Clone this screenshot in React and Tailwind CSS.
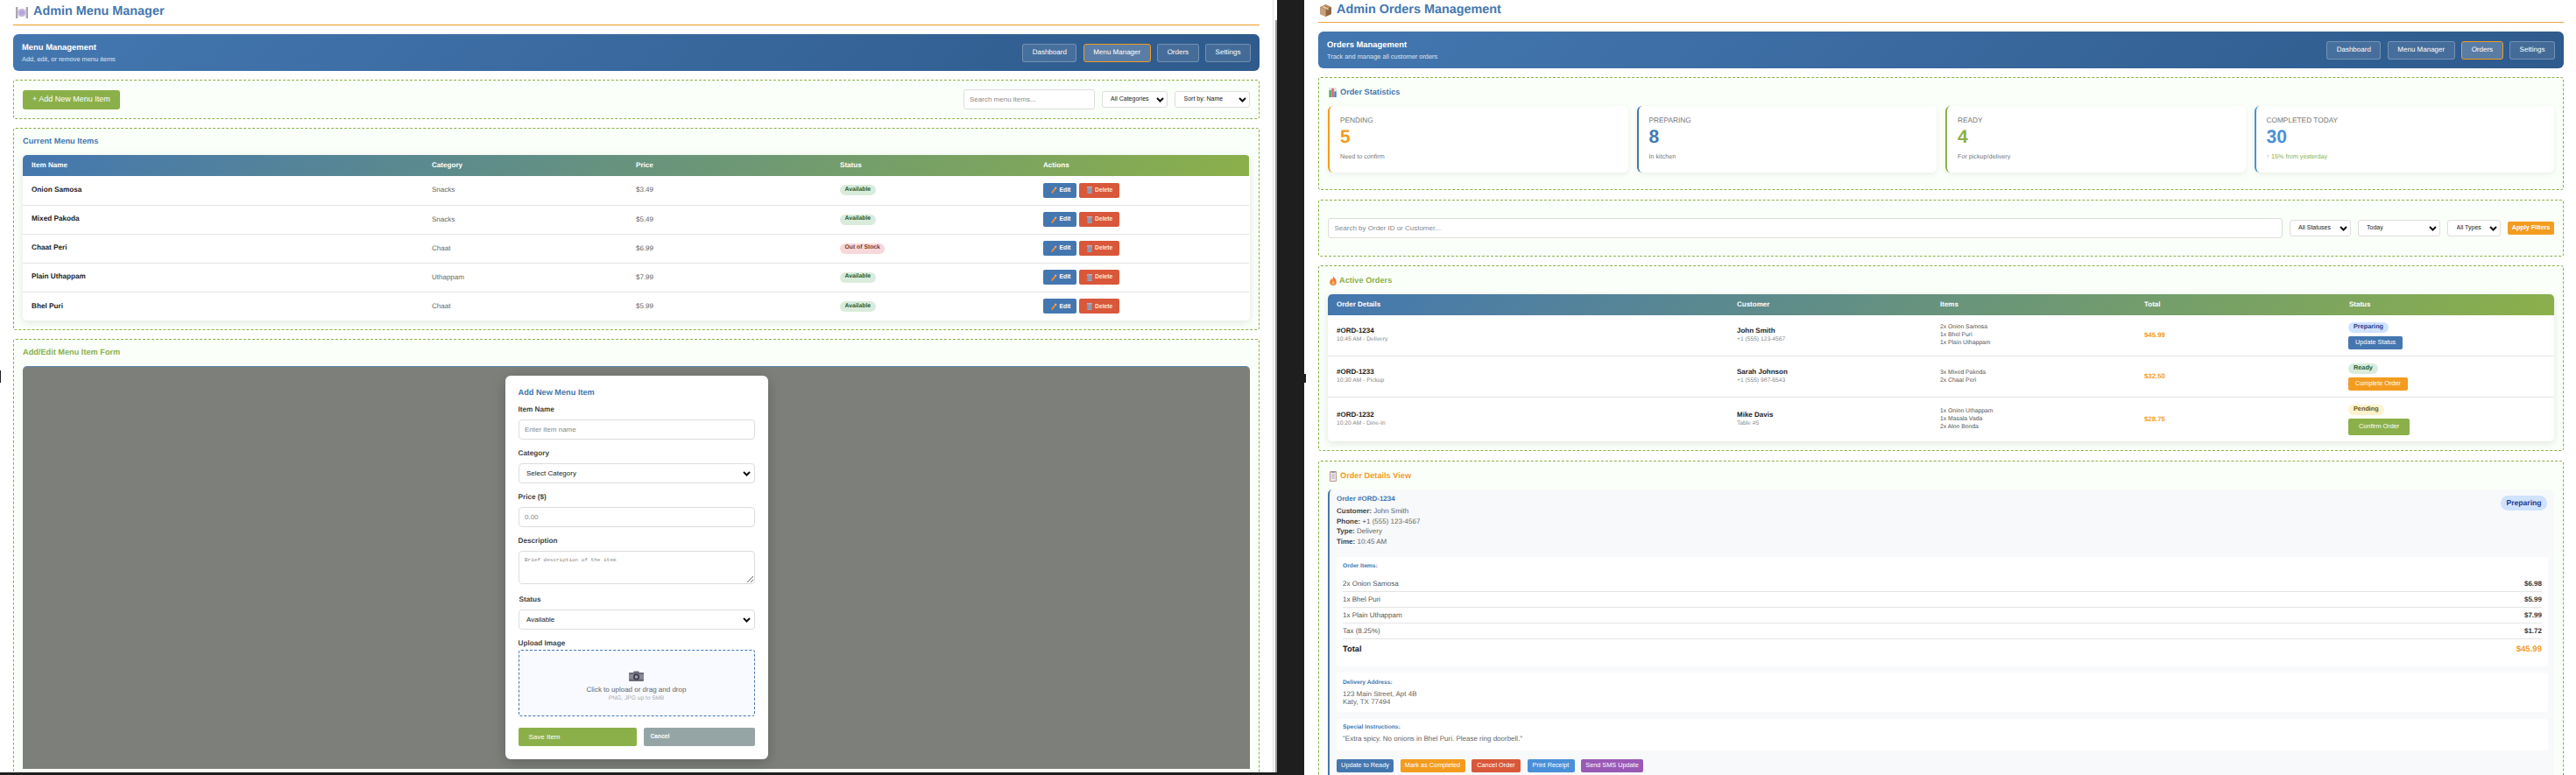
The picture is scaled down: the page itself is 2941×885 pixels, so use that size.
import React from "react";

const Plate = () => (
  <svg width="14" height="13" viewBox="0 0 14 13" className="shrink-0">
    <rect x="0" y="0" width="2.4" height="13" fill="#a9a6b0" />
    <rect x="11.6" y="0" width="2.4" height="13" fill="#a9a6b0" />
    <circle cx="7" cy="6.5" r="4.8" fill="#c9bde4" />
    <circle cx="7" cy="6.5" r="3" fill="#b5a6da" />
  </svg>
);
const Box = () => (
  <svg width="13" height="14" viewBox="0 0 13 14" className="shrink-0">
    <path d="M6.5 0 13 3v8l-6.5 3L0 11V3z" fill="#b8895e" />
    <path d="M6.5 6 13 3v8l-6.5 3z" fill="#8f6744" />
    <path d="M0 3l6.5 3v8L0 11z" fill="#c9a27c" />
    <path d="M3 1.6 9.6 4.6v2L3 3.6z" fill="#e0c7a8" />
  </svg>
);
const Chart = () => (
  <svg width="9" height="11" viewBox="0 0 9 11" className="shrink-0">
    <rect width="9" height="11" fill="#dfe6e4" />
    <rect x="0.5" y="3" width="2.4" height="8" fill="#5aa36a" />
    <rect x="3.4" y="1" width="2.4" height="10" fill="#d9606a" />
    <rect x="6.3" y="4.5" width="2.4" height="6.5" fill="#4a7fc0" />
  </svg>
);
const Fire = () => (
  <svg width="8" height="11" viewBox="0 0 8 11" className="shrink-0">
    <path d="M4 0c.6 2 3.8 3.6 3.8 7A3.8 4 0 0 1 .2 7C.2 5 1.6 4.400 2 3c.5.5.8 1 .9 1.600C3.600 3.500 4.100 1.600 4 0z" fill="#ee7b3a" />
    <path d="M4 5c.4 1 1.800 1.800 1.800 3.200a1.800 2 0 0 1-3.600 0C2.200 7 3.600 6.400 4 5z" fill="#f6b45a" />
  </svg>
);
const Clip = () => (
  <svg width="8" height="12" viewBox="0 0 8 12" className="shrink-0">
    <rect width="8" height="12" rx="1" fill="#b79a8c" />
    <rect x="1" y="1.500" width="6" height="9.500" fill="#eeeaf0" />
    <rect x="2.500" y="0" width="3" height="2" fill="#8d8d98" />
    <path d="M2 4h4M2 6h4M2 8h4" stroke="#9a9aa8" strokeWidth="0.7" />
  </svg>
);
const Camera = () => (
  <svg width="17" height="12" viewBox="0 0 17 12">
    <path d="M1 2h4l1-1.500h5L12 2h4a1 1 0 0 1 1 1v8a1 1 0 0 1-1 1H1a1 1 0 0 1-1-1V3a1 1 0 0 1 1-1z" fill="#6c6a78" />
    <rect x="0" y="4" width="17" height="5.500" fill="#8b8996" />
    <circle cx="8.500" cy="7" r="3.600" fill="#3e3d4a" />
    <circle cx="8.500" cy="7" r="1.800" fill="#a5a6c0" />
  </svg>
);
const Pencil = () => (
  <svg width="7" height="8" viewBox="0 0 7 8" className="shrink-0">
    <path d="M5 0.500 6.500 1.800 2 7.500 0.300 8 0.600 6z" fill="#e98a3c" />
    <path d="M5 0.500 6.500 1.800 5.700 2.800 4.200 1.500z" fill="#f0b6b0" />
  </svg>
);
const Trash = () => (
  <svg width="6" height="8" viewBox="0 0 6 8" className="shrink-0">
    <rect x="0" y="0" width="6" height="1.600" fill="#aeb6c8" />
    <rect x="0.500" y="1.600" width="5" height="6.400" fill="#9aa4ba" />
    <path d="M2 2.500v4.500M4 2.500v4.500" stroke="#6f7890" strokeWidth="0.6" />
  </svg>
);
const Chev = ({ className }) => (
  <svg viewBox="0 0 9 6" className={"absolute pointer-events-none " + className}>
    <path d="M1 1l3.500 3.500L8 1" fill="none" stroke="#111" strokeWidth="2" />
  </svg>
);

const Sel = ({ label, className, textClass, chev }) => (
  <div className={"relative shrink-0 " + className}>
    <select
      defaultValue={label}
      className={"block appearance-none w-full h-full bg-white border border-[#dddddd] rounded-[3px] outline-none " + textClass}
    >
      <option>{label}</option>
    </select>
    <Chev className={chev} />
  </div>
);

const Section = ({ className, children }) => (
  <section className={"border border-dashed border-[#8bb04a] rounded-[3px] bg-[#fbfff9] " + className}>{children}</section>
);

const NavBar = ({ title, sub, active }) => (
  <div className="h-[42px] mt-[10px] flex items-center justify-between px-[10px] rounded-[6px] bg-[linear-gradient(135deg,#4477b0,#2e5a8c)] text-white">
    <div>
      <div className="text-[9.44px] leading-[11px] font-bold">{title}</div>
      <div className="text-[7.4px] leading-[9px] mt-[4px] opacity-80">{sub}</div>
    </div>
    <div className="flex gap-[7.500px]">
      {["Dashboard", "Menu Manager", "Orders", "Settings"].map((n) => (
        <a
          key={n}
          className={
            "h-[21px] px-[10.500px] flex items-center rounded-[3px] border text-[8px] " +
            (n === active ? "bg-white/20 border-[#f39c1f]" : "bg-white/10 border-white/25")
          }
        >
          {n}
        </a>
      ))}
    </div>
  </div>
);

const menuRows = [
  ["Onion Samosa", "Snacks", "$3.49", true],
  ["Mixed Pakoda", "Snacks", "$5.49", true],
  ["Chaat Peri", "Chaat", "$6.99", false],
  ["Plain Uthappam", "Uthappam", "$7.99", true],
  ["Bhel Puri", "Chaat", "$5.99", true],
];

const orders = [
  {
    id: "#ORD-1234", sub: "10:45 AM - Delivery", name: "John Smith", phone: "+1 (555) 123-4567",
    items: ["2x Onion Samosa", "1x Bhel Puri", "1x Plain Uthappam"], total: "$45.99",
    pill: "Preparing", pillC: "bg-[#cfe2ff] text-[#1e3a8a]", btn: "Update Status",
    btnC: "bg-[#4477b0] h-[15px] px-[8px]", h: "h-[46px]",
  },
  {
    id: "#ORD-1233", sub: "10:30 AM - Pickup", name: "Sarah Johnson", phone: "+1 (555) 987-6543",
    items: ["3x Mixed Pakoda", "2x Chaat Peri"], total: "$32.50",
    pill: "Ready", pillC: "bg-[#d9ecdc] text-[#1f5c32]", btn: "Complete Order",
    btnC: "bg-[#f39c1f] h-[15px] px-[8px]", h: "h-[47px]",
  },
  {
    id: "#ORD-1232", sub: "10:20 AM - Dine-In", name: "Mike Davis", phone: "Table #5",
    items: ["1x Onion Uthappam", "1x Masala Vada", "2x Aloo Bonda"], total: "$28.75",
    pill: "Pending", pillC: "bg-[#fff3cd] text-[#6b5410]", btn: "Confirm Order",
    btnC: "bg-[#8bb04a] h-[19px] px-[12px]", h: "h-[51px]",
  },
];

const stats = [
  { l: "PENDING", n: "5", s: "Need to confirm", b: "border-[#f39c1f]", c: "text-[#f39c1f]", sc: "text-[#777777]" },
  { l: "PREPARING", n: "8", s: "In kitchen", b: "border-[#4477b0]", c: "text-[#4477b0]", sc: "text-[#777777]" },
  { l: "READY", n: "4", s: "For pickup/delivery", b: "border-[#8bb04a]", c: "text-[#8bb04a]", sc: "text-[#777777]" },
  { l: "COMPLETED TODAY", n: "30", s: "↑ 15% from yesterday", b: "border-[#4a90d9]", c: "text-[#4a90d9]", sc: "text-[#8bb04a]" },
];

const Label = ({ children, className = "" }) => (
  <label className={"block text-[8.200px] leading-[10px] font-bold text-[#444444] " + className}>{children}</label>
);
const fieldBox = "block w-full h-[23px] border border-[#dddddd] rounded-[4px] bg-white text-[8px] outline-none";

export default function App() {
  return (
    <div className="relative flex w-[2941px] h-[885px] overflow-hidden bg-[#1e1e1e] font-['Liberation_Sans',Arial,sans-serif] [text-rendering:geometricPrecision]">
      {/* left document */}
      <main className="w-[1453px] h-[882px] px-[15px] bg-white overflow-hidden shrink-0">
        <h1 className="h-[29px] border-b border-[#f39c1f] flex items-center gap-[6px] pl-[3px] text-[14.400px] font-bold text-[#4477b0]">
          <Plate />
          Admin Menu Manager
        </h1>
        <NavBar title="Menu Management" sub="Add, edit, or remove menu items" active="Menu Manager" />

        <Section className="h-[45px] mt-[10px] px-[10px] flex items-center justify-between">
          <button className="h-[22px] px-[11px] rounded-[3px] bg-[#8bb04a] text-white text-[9px] leading-none">+ Add New Menu Item</button>
          <div className="flex items-center gap-[8px]">
            <input
              placeholder="Search menu items..."
              className="block w-[150px] h-[23px] px-[6.500px] border border-[#dddddd] rounded-[3px] bg-white text-[8px] outline-none placeholder:text-[#888888]"
            />
            <Sel label="All Categories" className="w-[75.500px] h-[19px]" textClass="pl-[9.500px] text-[7px] text-[#222222]" chev="w-[9px] h-[6px] right-[4px] top-[6.500px]" />
            <Sel label="Sort by: Name" className="w-[86px] h-[19px]" textClass="pl-[9.500px] text-[7px] text-[#222222]" chev="w-[9px] h-[6px] right-[4px] top-[6.500px]" />
          </div>
        </Section>

        <Section className="h-[231px] mt-[10px] px-[10px] pt-[10px]">
          <h2 className="h-[10px] mb-[10px] flex items-center text-[9.200px] font-bold text-[#4477b0]">Current Menu Items</h2>
          <div className="rounded-[5px] overflow-hidden shadow-[0_2px_8px_rgba(0,0,0,0.1)] bg-white">
            <table className="w-[1400px] table-fixed border-collapse">
              <colgroup>
                <col className="w-[457px]" />
                <col className="w-[233px]" />
                <col className="w-[233px]" />
                <col className="w-[232px]" />
                <col className="w-[245px]" />
              </colgroup>
              <thead>
                <tr className="h-[24px] bg-[linear-gradient(135deg,#4477b0,#8bb04a)] text-white text-[8.100px] text-left">
                  {["Item Name", "Category", "Price", "Status", "Actions"].map((h) => (
                    <th key={h} className="pl-[10px] font-bold">{h}</th>
                  ))}
                </tr>
              </thead>
              <tbody>
                {menuRows.map((r, i) => (
                  <tr key={r[0]} className={"h-[33px] " + (i < 4 ? "border-b border-[#e4e4e4]" : "")}>
                    <td className="pl-[10px] text-[8.200px] font-bold text-[#222222]">{r[0]}</td>
                    <td className="pl-[10px] text-[8px] text-[#666666]">{r[1]}</td>
                    <td className="pl-[10px] text-[8px] text-[#666666]">{r[2]}</td>
                    <td className="pl-[10px]">
                      <div className="flex">
                        <span
                          className={
                            "flex items-center h-[12px] px-[5.500px] rounded-full text-[6.800px] font-bold " +
                            (r[3] ? "bg-[#d9ecdc] text-[#1f5c32]" : "bg-[#f8d7da] text-[#7c3a20]")
                          }
                        >
                          {r[3] ? "Available" : "Out of Stock"}
                        </span>
                      </div>
                    </td>
                    <td className="pl-[10px]">
                      <div className="flex gap-[3px]">
                        <button className="h-[17px] w-[38px] pl-[8.500px] flex items-center gap-[3px] rounded-[2px] bg-[#4477b0] text-white text-[6.800px] font-bold">
                          <Pencil />
                          Edit
                        </button>
                        <button className="h-[17px] w-[46px] pl-[9px] flex items-center gap-[3px] rounded-[2px] bg-[#d9573a] text-[#ffe6e0] text-[6.800px] font-bold">
                          <Trash />
                          Delete
                        </button>
                      </div>
                    </td>
                  </tr>
                ))}
              </tbody>
            </table>
          </div>
        </Section>

        <Section className="h-[520px] mt-[10px] px-[10px] pt-[10px]">
          <h2 className="h-[10px] mb-[10px] flex items-center text-[9.200px] font-bold text-[#8bb04a]">Add/Edit Menu Item Form</h2>
          <div className="h-[460px] rounded-t-[5px] bg-[#7d7f7b] border-t border-[#5f86ad] flex justify-center pt-[10px]">
            <div className="w-[300px] h-[438px] rounded-[6px] bg-white px-[15px] pt-[15px] shadow-[0_4px_16px_rgba(0,0,0,0.2)]">
              <h3 className="h-[10px] flex items-center text-[9.200px] font-bold text-[#4477b0]">Add New Menu Item</h3>
              <Label className="mt-[9px]">Item Name</Label>
              <input placeholder="Enter item name" className={fieldBox + " mt-[6px] px-[6.500px] placeholder:text-[#888888]"} />
              <Label className="mt-[11px]">Category</Label>
              <Sel label="Select Category" className="w-full h-[23px] mt-[6px]" textClass="pl-[8.500px] text-[8px] text-[#222222] rounded-[4px]" chev="w-[9px] h-[6px] right-[5px] top-[8.500px]" />
              <Label className="mt-[11px]">Price ($)</Label>
              <input placeholder="0.00" className={fieldBox + " mt-[6px] px-[6.500px] placeholder:text-[#888888]"} />
              <Label className="mt-[11px]">Description</Label>
              <textarea
                placeholder="Brief description of the item"
                className="block w-full h-[38px] mt-[6px] px-[6.500px] py-[5px] border border-[#dddddd] rounded-[4px] bg-white text-[6px] leading-[9px] font-['Liberation_Mono',monospace] outline-none placeholder:text-[#888888]"
              />
              <Label className="mt-[13px] pl-[1px]">Status</Label>
              <Sel label="Available" className="w-full h-[23px] mt-[6px]" textClass="pl-[8.500px] text-[8px] text-[#222222] rounded-[4px]" chev="w-[9px] h-[6px] right-[5px] top-[8.500px]" />
              <Label className="mt-[11px]">Upload Image</Label>
              <div className="mt-[2px] h-[76px] border border-dashed border-[#4477b0] rounded-[3px] bg-[#f8faff] flex flex-col items-center pt-[23px]">
                <Camera />
                <p className="mt-[5px] text-[8px] leading-[10px] text-[#666666]">Click to upload or drag and drop</p>
                <p className="text-[6.700px] leading-[9px] text-[#aaaaaa]">PNG, JPG up to 5MB</p>
              </div>
              <div className="mt-[13px] flex gap-[8px]">
                <button className="w-[135px] h-[21px] pl-[12px] text-left rounded-[2px] bg-[#8bb04a] text-white text-[8px]">Save Item</button>
                <button className="w-[127px] h-[21px] pl-[8px] text-left rounded-[2px] bg-[#95a5a6] text-white text-[6.700px] font-bold">Cancel</button>
              </div>
            </div>
          </div>
        </Section>
      </main>

      {/* scrollbar of the left document */}
      <div className="w-[5px] h-[882px] shrink-0 bg-white border-l border-[#e2e2e2] pt-[23px] pl-[2px]">
        <div className="w-[2px] h-full bg-[#9a9a9a]" />
      </div>

      {/* divider */}
      <div className="w-[31px] shrink-0" />

      {/* right document */}
      <main className="w-[1452px] h-[885px] pl-[16px] pr-[14px] bg-white overflow-hidden shrink-0">
        <h1 className="h-[26px] pb-[2px] border-b border-[#f0a040] flex items-center gap-[6px] pl-[2px] text-[14.400px] font-bold text-[#4477b0]">
          <Box />
          Admin Orders Management
        </h1>
        <NavBar title="Orders Management" sub="Track and manage all customer orders" active="Orders" />

        <Section className="h-[129px] mt-[10px] px-[10px] pt-[10px]">
          <h2 className="h-[13px] mb-[9px] flex items-center gap-[4px] pl-[1px] text-[9.200px] font-bold text-[#4477b0]">
            <Chart />
            Order Statistics
          </h2>
          <div className="grid grid-cols-4 gap-[10px]">
            {stats.map((s) => (
              <div key={s.l} className={"h-[76px] rounded-[6px] bg-white border-l-2 pl-[12px] pt-[11px] shadow-[0_2px_6px_rgba(0,0,0,0.07)] " + s.b}>
                <div className="h-[10px] leading-[10px] text-[8.300px] text-[#777777]">{s.l}</div>
                <div className={"h-[20px] leading-[20px] mt-[5px] text-[21px] font-bold " + s.c}>{s.n}</div>
                <div className={"h-[10px] leading-[10px] mt-[7px] text-[7.200px] " + s.sc}>{s.s}</div>
              </div>
            ))}
          </div>
        </Section>

        <Section className="h-[65px] mt-[11px] px-[10px] flex items-center gap-[8px]">
          <input
            placeholder="Search by Order ID or Customer..."
            className="block flex-1 h-[23px] px-[6.500px] border border-[#dddddd] rounded-[3px] bg-white text-[8px] outline-none placeholder:text-[#888888]"
          />
          <Sel label="All Statuses" className="w-[70px] h-[19px]" textClass="pl-[9.500px] text-[7px] text-[#222222]" chev="w-[9px] h-[6px] right-[4px] top-[6.500px]" />
          <Sel label="Today" className="w-[94.500px] h-[19px]" textClass="pl-[9.500px] text-[7px] text-[#222222]" chev="w-[9px] h-[6px] right-[4px] top-[6.500px]" />
          <Sel label="All Types" className="w-[61px] h-[19px]" textClass="pl-[9.500px] text-[7px] text-[#222222]" chev="w-[9px] h-[6px] right-[4px] top-[6.500px]" />
          <button className="w-[53px] h-[15px] rounded-[2px] bg-[#f39c1f] text-white text-[7.200px] font-bold">Apply Filters</button>
        </Section>

        <Section className="h-[212px] mt-[10px] px-[10px] pt-[10px]">
          <h2 className="h-[13px] mb-[9px] flex items-center gap-[3px] pl-[2px] text-[9.200px] font-bold text-[#8bb04a]">
            <Fire />
            Active Orders
          </h2>
          <div className="rounded-[5px] overflow-hidden shadow-[0_2px_8px_rgba(0,0,0,0.1)] bg-white">
            <table className="w-[1400px] table-fixed border-collapse">
              <colgroup>
                <col className="w-[457px]" />
                <col className="w-[232px]" />
                <col className="w-[233px]" />
                <col className="w-[234px]" />
                <col className="w-[244px]" />
              </colgroup>
              <thead>
                <tr className="h-[24px] bg-[linear-gradient(135deg,#4477b0,#8bb04a)] text-white text-[8px] text-left">
                  {["Order Details", "Customer", "Items", "Total", "Status"].map((h) => (
                    <th key={h} className="pl-[10px] font-bold">{h}</th>
                  ))}
                </tr>
              </thead>
              <tbody>
                {orders.map((o, i) => (
                  <tr key={o.id} className={o.h + " " + (i < 2 ? "border-b border-[#e4e4e4]" : "")}>
                    <td className="pl-[10px]">
                      <div className="text-[8px] leading-[10px] font-bold text-[#222222]">{o.id}</div>
                      <div className="text-[6.700px] leading-[9px] text-[#888888]">{o.sub}</div>
                    </td>
                    <td className="pl-[10px]">
                      <div className="text-[8px] leading-[10px] font-bold text-[#222222]">{o.name}</div>
                      <div className="text-[6.700px] leading-[9px] text-[#888888]">{o.phone}</div>
                    </td>
                    <td className="pl-[10px] text-[6.800px] leading-[9px] text-[#555555]">
                      {o.items.map((t) => (
                        <div key={t}>{t}</div>
                      ))}
                    </td>
                    <td className="pl-[10px] text-[7.800px] font-bold text-[#f39c1f]">{o.total}</td>
                    <td className="pl-[9px]">
                      <div className="flex flex-col items-start gap-[4px] pt-[1px]">
                        <span className={"flex items-center h-[12px] px-[6px] rounded-full text-[7.300px] font-bold " + o.pillC}>{o.pill}</span>
                        <button className={"rounded-[2px] text-white text-[7.300px] " + o.btnC}>{o.btn}</button>
                      </div>
                    </td>
                  </tr>
                ))}
              </tbody>
            </table>
          </div>
        </Section>

        <Section className="h-[380px] mt-[11px] px-[10px] pt-[10px]">
          <h2 className="h-[13px] mb-[9px] flex items-center gap-[4px] pl-[2px] text-[9.200px] font-bold text-[#f39c1f]">
            <Clip />
            Order Details View
          </h2>
          <div className="h-[340px] rounded-[5px] border-l-2 border-[#4477b0] bg-[#f8f9fa] pl-[8px] pr-[7px] pt-[6px]">
            <div className="h-[71px] flex justify-between items-start">
              <div>
                <div className="h-[10px] leading-[10px] text-[8px] font-bold text-[#4477b0]">Order #ORD-1234</div>
                <div className="mt-[3px] text-[8px] leading-[11.600px] text-[#666666]">
                  {[["Customer:", "John Smith"], ["Phone:", "+1 (555) 123-4567"], ["Type:", "Delivery"], ["Time:", "10:45 AM"]].map(([a, b]) => (
                    <div key={a}>
                      <b className="text-[#444444]">{a}</b> {b}
                    </div>
                  ))}
                </div>
              </div>
              <span className="mt-[1px] h-[17px] w-[53px] mr-[1px] flex items-center justify-center rounded-full bg-[#cfe2ff] text-[#1e3a8a] text-[8.600px] font-bold">Preparing</span>
            </div>
            <div className="h-[125px] rounded-[4px] bg-white px-[7px] pt-[5px]">
              <h4 className="h-[12px] mb-[5px] leading-[12px] text-[6.700px] font-bold text-[#4477b0]">Order Items:</h4>
              {[["2x Onion Samosa", "$6.98"], ["1x Bhel Puri", "$5.99"], ["1x Plain Uthappam", "$7.99"], ["Tax (8.25%)", "$1.72"]].map(([a, b]) => (
                <div key={a} className="h-[18px] border-b border-[#e4e4e4] flex items-center justify-between text-[8px] text-[#555555]">
                  <span>{a}</span>
                  <b className="text-[#333333]">{b}</b>
                </div>
              ))}
              <div className="h-[24px] flex items-center justify-between font-bold text-[#222222] text-[9.300px]">
                <span>Total</span>
                <span className="text-[#f39c1f] text-[9.600px]">$45.99</span>
              </div>
            </div>
            <div className="h-[45px] mt-[7px] rounded-[4px] bg-white px-[7px] pt-[6px]">
              <h4 className="h-[12px] leading-[12px] text-[6.700px] font-bold text-[#4477b0]">Delivery Address:</h4>
              <p className="mt-[1.500px] text-[8px] leading-[9px] text-[#666666]">
                123 Main Street, Apt 4B
                <br />
                Katy, TX 77494
              </p>
            </div>
            <div className="h-[36px] mt-[8px] rounded-[4px] bg-white px-[7px] pt-[4px]">
              <h4 className="h-[12px] leading-[12px] text-[6.700px] font-bold text-[#4477b0]">Special Instructions:</h4>
              <p className="mt-[2px] text-[8px] leading-[10px] text-[#666666]">"Extra spicy. No onions in Bhel Puri. Please ring doorbell."</p>
            </div>
            <div className="mt-[10px] flex gap-[7.500px]">
              <button className="h-[15px] w-[65px] rounded-[2px] bg-[#4477b0] text-white text-[7.300px]">Update to Ready</button>
              <button className="h-[15px] w-[74px] rounded-[2px] bg-[#f39c1f] text-white text-[7.300px]">Mark as Completed</button>
              <button className="h-[15px] w-[56px] rounded-[2px] bg-[#d9573a] text-white text-[7.300px]">Cancel Order</button>
              <button className="h-[15px] w-[54px] rounded-[2px] bg-[#4a90d9] text-white text-[7.300px]">Print Receipt</button>
              <button className="h-[15px] w-[71px] rounded-[2px] bg-[#9b59b6] text-white text-[7.300px]">Send SMS Update</button>
            </div>
          </div>
        </Section>
      </main>

      {/* splitter grips */}
      <span className="absolute left-0 top-[423px] w-[1px] h-[14px] bg-[#1e1e1e]" />
      <span className="absolute left-[1489px] top-[427px] w-[2px] h-[10px] bg-[#1e1e1e]" />
    </div>
  );
}
